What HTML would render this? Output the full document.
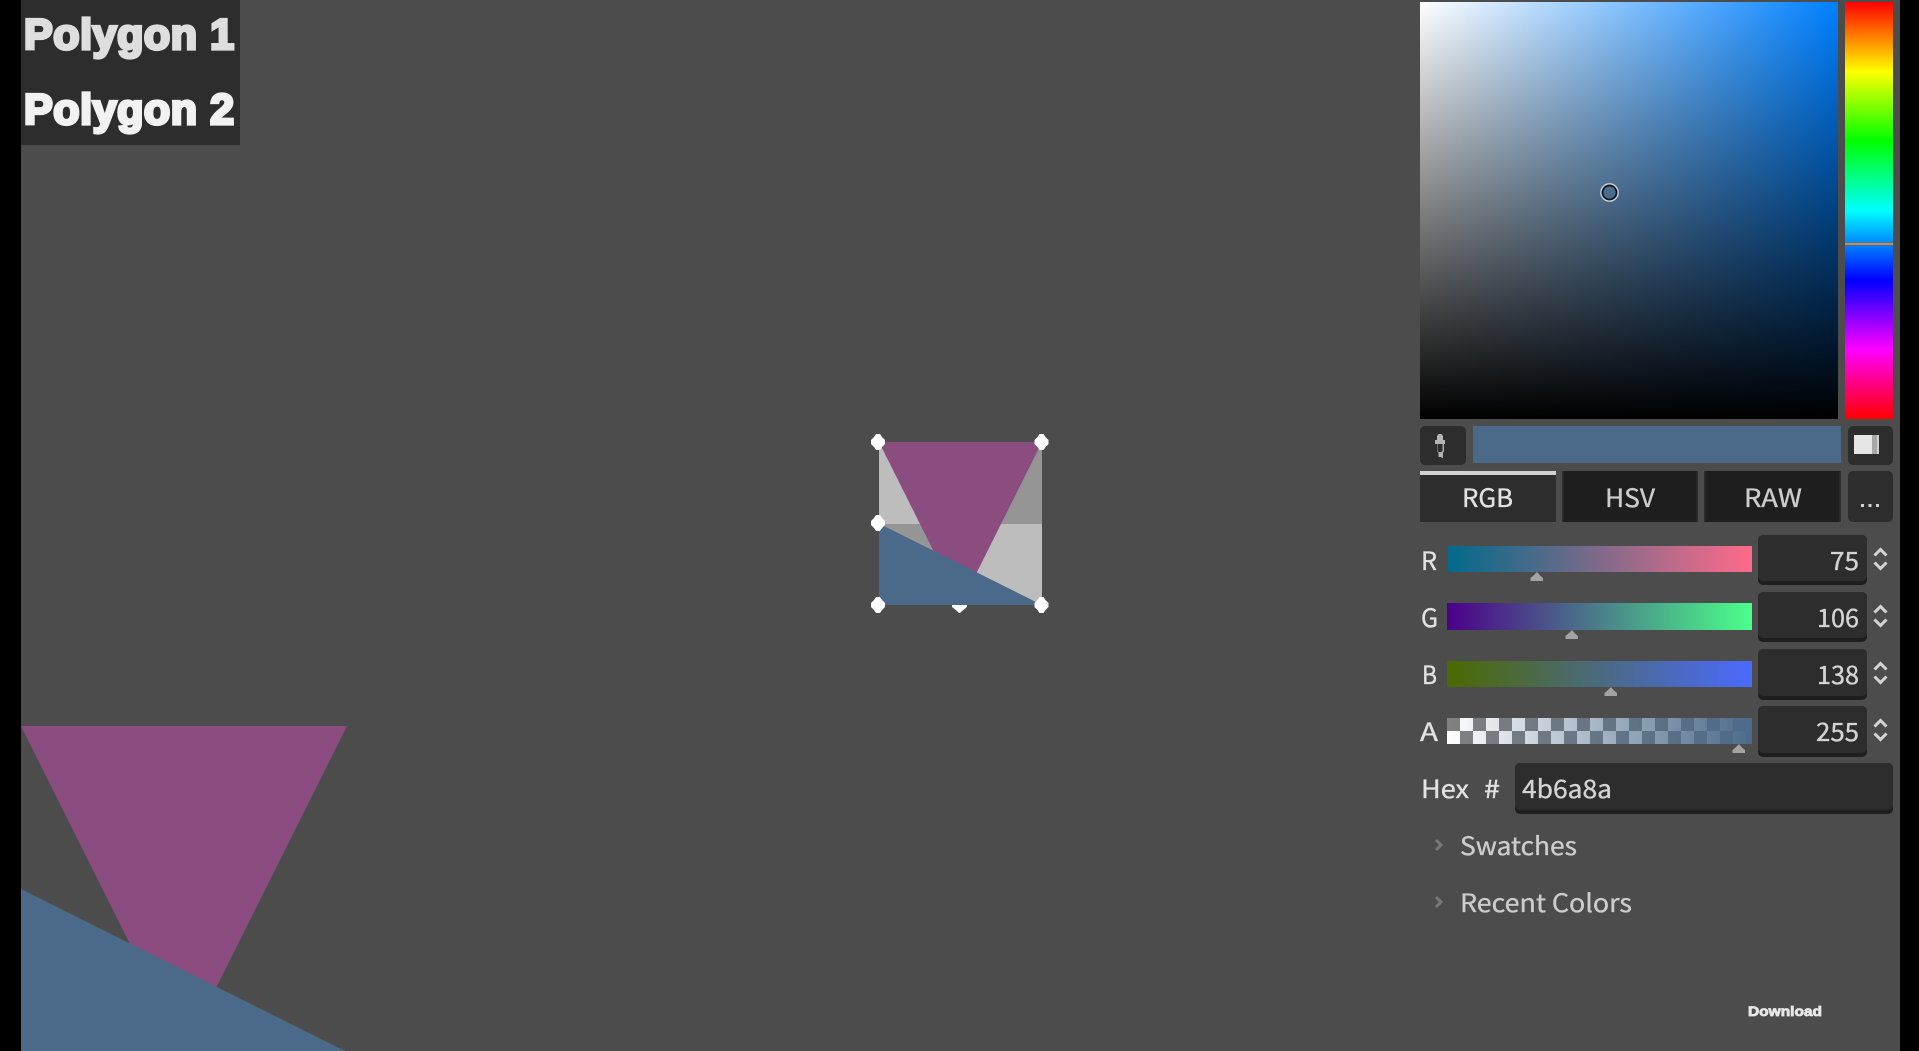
<!DOCTYPE html>
<html>
<head>
<meta charset="utf-8">
<style>
html,body{margin:0;padding:0;width:1919px;height:1051px;overflow:hidden;background:#4c4c4c}
svg{display:block}
.t{font-family:"Noto Sans CJK SC","DejaVu Sans","Liberation Sans",sans-serif;font-size:25px;fill:#e2e2e2;stroke:#e2e2e2;stroke-width:.35px}
.d{fill:#d4d4d4;stroke:#d4d4d4}
.c{fill:#cccccc;stroke:#cccccc}
.p{font-family:"Liberation Sans",sans-serif;font-weight:700;font-size:43px;stroke-width:3.2px;stroke-linejoin:miter}
</style>
</head>
<body>
<svg width="1919" height="1051" viewBox="0 0 1919 1051" xmlns="http://www.w3.org/2000/svg">
<defs>
<linearGradient id="sv1"><stop offset="0" stop-color="#fff"/><stop offset="1" stop-color="#0080ff"/></linearGradient>
<linearGradient id="sv2" x1="0" y1="0" x2="0" y2="1"><stop offset="0" stop-color="#000" stop-opacity="0"/><stop offset="1" stop-color="#000"/></linearGradient>
<linearGradient id="hue" x1="0" y1="0" x2="0" y2="1">
<stop offset="0" stop-color="#f00"/><stop offset=".1667" stop-color="#ff0"/><stop offset=".3333" stop-color="#0f0"/><stop offset=".5" stop-color="#0ff"/><stop offset=".6667" stop-color="#00f"/><stop offset=".8333" stop-color="#f0f"/><stop offset="1" stop-color="#f00"/>
</linearGradient>
<linearGradient id="gr"><stop offset="0" stop-color="#006a8a"/><stop offset="1" stop-color="#ff6a8a"/></linearGradient>
<linearGradient id="gg"><stop offset="0" stop-color="#4b008a"/><stop offset="1" stop-color="#4bff8a"/></linearGradient>
<linearGradient id="gb"><stop offset="0" stop-color="#4b6a00"/><stop offset="1" stop-color="#4b6aff"/></linearGradient>
<linearGradient id="ga"><stop offset="0" stop-color="#4b6a8a" stop-opacity="0"/><stop offset="1" stop-color="#4b6a8a"/></linearGradient>
<pattern id="chk" x="1447" y="718" width="26" height="26" patternUnits="userSpaceOnUse">
<rect width="26" height="26" fill="#fff"/>
<rect x="0" y="0" width="13" height="13" fill="#808080"/>
<rect x="13" y="13" width="13" height="13" fill="#808080"/>
</pattern>
<path id="h" d="M-2-8H2L4-5 7-2V2L4 5 2 8H-2L-4 5-7 2V-2L-4-5Z" fill="#fff"/>
</defs>

<rect width="1919" height="1051" fill="#4c4c4c"/>
<rect x="0" y="0" width="21" height="1051" fill="#000"/>
<rect x="1900" y="0" width="19" height="1051" fill="#000"/>

<!-- polygon list -->
<rect x="21" y="0" width="219" height="145" fill="#2d2d2d"/>
<text class="p" x="24" y="49" fill="#dedede" stroke="#dedede" textLength="210" lengthAdjust="spacing">Polygon 1</text>
<text class="p" x="24" y="124" fill="#f2f2f2" stroke="#f2f2f2" textLength="210" lengthAdjust="spacing">Polygon 2</text>

<!-- small editor -->
<g shape-rendering="crispEdges">
<rect x="879" y="442" width="82" height="82" fill="#bdbdbd"/>
<rect x="961" y="442" width="81" height="82" fill="#959595"/>
<rect x="879" y="524" width="82" height="81" fill="#959595"/>
<rect x="961" y="524" width="81" height="81" fill="#bdbdbd"/>
<polygon points="879,442 1042,442 960.5,605" fill="#8b4c7f"/>
<polygon points="879,523.5 1042,605 879,605" fill="#4b6a8a"/>
</g>
<path d="M952 605h15v2l-5 4-2 2h-1l-2-2-5-4z" fill="#fff"/>
<use href="#h" x="878" y="442"/>
<use href="#h" x="1041.500" y="442"/>
<use href="#h" x="878" y="523"/>
<use href="#h" x="878" y="605"/>
<use href="#h" x="1041.500" y="605"/>

<!-- large preview -->
<g shape-rendering="crispEdges">
<polygon points="21,726 347,726 184,1052" fill="#8b4c7f"/>
<polygon points="21,889 347,1052 21,1052" fill="#4b6a8a"/>
</g>

<!-- SV square -->
<rect x="1420" y="2" width="418" height="417" fill="url(#sv1)"/>
<rect x="1420" y="2" width="418" height="417" fill="url(#sv2)"/>
<circle cx="1609.500" cy="192.500" r="8.600" fill="none" stroke="#c8ced6" stroke-width="1.500"/>
<circle cx="1609.500" cy="192.500" r="7" fill="none" stroke="#0c1420" stroke-width="1.700"/>

<!-- hue bar -->
<rect x="1845" y="2" width="48" height="417" fill="url(#hue)"/>
<rect x="1845" y="243" width="48" height="2" fill="#ff7f00"/>

<!-- eyedropper row -->
<rect x="1420" y="426" width="46" height="39" rx="5" fill="#2d2d2d"/>
<path d="M1437 440v-4l1.500-2h3l1.500 2v4h2v4h-10v-4z" fill="#b4b4b4"/>
<path d="M1437 444v7l1.500 2v4h3v1h1.500v-5l1-2v-7h-1.500v6.500l-1 1.500h-3l-1-1.500v-6.500z" fill="#a8a8a8"/>
<rect x="1438.500" y="453" width="3.500" height="4" fill="#b4b4b4"/>
<rect x="1473" y="426" width="368" height="37" fill="#4b6a8a"/>
<rect x="1848" y="426" width="45" height="39" rx="5" fill="#2d2d2d"/>
<rect x="1854" y="435" width="18" height="19" fill="#e6e6e6"/>
<rect x="1872" y="435" width="5" height="19" fill="#a8a8a8"/>
<rect x="1877" y="435" width="2" height="19" fill="#d0d0d0"/>

<!-- tabs -->
<rect x="1420" y="471" width="136" height="51" fill="#2d2d2d"/>
<rect x="1420" y="471" width="136" height="4" fill="#d2d2d2"/>
<rect x="1562" y="471" width="136" height="51" fill="#2d2d2d"/>
<rect x="1563.500" y="471" width="133" height="51" fill="#1e1e1e"/>
<rect x="1704" y="471" width="137" height="51" fill="#2d2d2d"/>
<rect x="1705.500" y="471" width="134" height="51" fill="#1e1e1e"/>
<rect x="1848" y="471" width="45" height="51" rx="5" fill="#2d2d2d"/>
<text class="t" x="1462" y="507" textLength="51" lengthAdjust="spacingAndGlyphs">RGB</text>
<text class="t c" x="1605" y="507" textLength="50" lengthAdjust="spacingAndGlyphs">HSV</text>
<text class="t c" x="1744" y="507" textLength="58" lengthAdjust="spacingAndGlyphs">RAW</text>
<g fill="#cfcfcf">
<rect x="1861" y="504" width="3" height="3"/><rect x="1868.500" y="504" width="3" height="3"/><rect x="1876" y="504" width="3" height="3"/>
</g>

<!-- R -->
<text class="t" x="1421" y="570" textLength="16" lengthAdjust="spacingAndGlyphs">R</text>
<rect x="1447" y="546" width="305" height="26" fill="url(#gr)"/>
<path d="M1537 572l3 3.500 3 2.500v3h-12.500v-3l3-2.500z" fill="#a3a3a3"/>
<path d="M1758 540a5 5 0 0 1 5-5h99a5 5 0 0 1 5 5v40a5 5 0 0 1-5 5h-99a5 5 0 0 1-5-5z" fill="#1e1e1e"/>
<path d="M1758 540a5 5 0 0 1 5-5h99a5 5 0 0 1 5 5v36a5 5 0 0 1-5 5h-99a5 5 0 0 1-5-5z" fill="#2d2d2d"/>
<text class="t d" x="1830" y="570" textLength="29" lengthAdjust="spacingAndGlyphs">75</text>
<path d="M1874.500 555.500l6-6 6 6M1874.500 562.500l6 6 6-6" fill="none" stroke="#d4d4d4" stroke-width="3"/>

<!-- G -->
<text class="t" x="1421" y="627" textLength="17" lengthAdjust="spacingAndGlyphs">G</text>
<rect x="1447" y="603" width="305" height="27" fill="url(#gg)"/>
<path d="M1572 630l3 3.500 3 2.500v3h-12.500v-3l3-2.500z" fill="#a3a3a3"/>
<path d="M1758 597a5 5 0 0 1 5-5h99a5 5 0 0 1 5 5v40a5 5 0 0 1-5 5h-99a5 5 0 0 1-5-5z" fill="#1e1e1e"/>
<path d="M1758 597a5 5 0 0 1 5-5h99a5 5 0 0 1 5 5v36a5 5 0 0 1-5 5h-99a5 5 0 0 1-5-5z" fill="#2d2d2d"/>
<text class="t d" x="1817" y="627" textLength="42" lengthAdjust="spacingAndGlyphs">106</text>
<path d="M1874.500 612.500l6-6 6 6M1874.500 619.500l6 6 6-6" fill="none" stroke="#d4d4d4" stroke-width="3"/>

<!-- B -->
<text class="t" x="1422" y="684" textLength="15" lengthAdjust="spacingAndGlyphs">B</text>
<rect x="1447" y="661" width="305" height="26" fill="url(#gb)"/>
<path d="M1611 687l3 3.500 3 2.500v3h-12.500v-3l3-2.500z" fill="#a3a3a3"/>
<path d="M1758 654a5 5 0 0 1 5-5h99a5 5 0 0 1 5 5v41a5 5 0 0 1-5 5h-99a5 5 0 0 1-5-5z" fill="#1e1e1e"/>
<path d="M1758 654a5 5 0 0 1 5-5h99a5 5 0 0 1 5 5v37a5 5 0 0 1-5 5h-99a5 5 0 0 1-5-5z" fill="#2d2d2d"/>
<text class="t d" x="1817" y="684" textLength="42" lengthAdjust="spacingAndGlyphs">138</text>
<path d="M1874.500 669.500l6-6 6 6M1874.500 676.500l6 6 6-6" fill="none" stroke="#d4d4d4" stroke-width="3"/>

<!-- A -->
<text class="t" x="1420" y="741" textLength="18" lengthAdjust="spacingAndGlyphs">A</text>
<rect x="1447" y="718" width="305" height="26" fill="url(#chk)"/>
<rect x="1447" y="718" width="305" height="26" fill="url(#ga)"/>
<path d="M1739 744l3 3.500 3 2.500v3h-12.500v-3l3-2.500z" fill="#a3a3a3"/>
<path d="M1758 711a5 5 0 0 1 5-5h99a5 5 0 0 1 5 5v41a5 5 0 0 1-5 5h-99a5 5 0 0 1-5-5z" fill="#1e1e1e"/>
<path d="M1758 711a5 5 0 0 1 5-5h99a5 5 0 0 1 5 5v37a5 5 0 0 1-5 5h-99a5 5 0 0 1-5-5z" fill="#2d2d2d"/>
<text class="t d" x="1816" y="741" textLength="43" lengthAdjust="spacingAndGlyphs">255</text>
<path d="M1874.500 726.500l6-6 6 6M1874.500 733.500l6 6 6-6" fill="none" stroke="#d4d4d4" stroke-width="3"/>

<!-- hex -->
<text class="t" x="1421" y="798" textLength="48" lengthAdjust="spacingAndGlyphs">Hex</text>
<text class="t" x="1484" y="798" textLength="16" lengthAdjust="spacingAndGlyphs">#</text>
<path d="M1515 768a5 5 0 0 1 5-5h368a5 5 0 0 1 5 5v41a5 5 0 0 1-5 5h-368a5 5 0 0 1-5-5z" fill="#1e1e1e"/>
<path d="M1515 768a5 5 0 0 1 5-5h368a5 5 0 0 1 5 5v37a5 5 0 0 1-5 5h-368a5 5 0 0 1-5-5z" fill="#2d2d2d"/>
<text class="t d" x="1522" y="798" textLength="90" lengthAdjust="spacingAndGlyphs">4b6a8a</text>

<!-- collapsibles -->
<path d="M1436 840l5 5-5 5" fill="none" stroke="#777" stroke-width="3"/>
<text class="t c" x="1460" y="855" textLength="117" lengthAdjust="spacingAndGlyphs">Swatches</text>
<path d="M1436 897l5 5-5 5" fill="none" stroke="#777" stroke-width="3"/>
<text class="t c" x="1460" y="912" textLength="172" lengthAdjust="spacingAndGlyphs">Recent Colors</text>

<!-- download -->
<text x="1748" y="1016" font-family="Liberation Sans, sans-serif" font-weight="700" font-size="14" fill="#e8e8e8" stroke="#e8e8e8" stroke-width=".8" textLength="74" lengthAdjust="spacingAndGlyphs">Download</text>
</svg>
</body>
</html>
